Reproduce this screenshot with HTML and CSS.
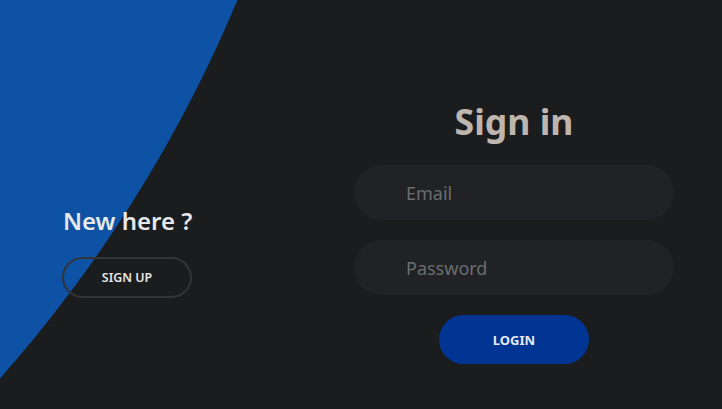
FILE: index.html
```html
<!DOCTYPE html>
<html lang="en">
<head>
<meta charset="utf-8">
<title>Sign in</title>
<link rel="stylesheet" href="styles.css">
</head>
<body>
<div class="container">
  <div class="blob"></div>
  <div class="panel-left">
    <h3 class="new-title">New here ?</h3>
    <button class="btn-outline" type="button">SIGN UP</button>
  </div>
  <form class="signin-form">
    <h2 class="title">Sign in</h2>
    <div class="input-field"><input type="text" placeholder="Email"></div>
    <div class="input-field"><input type="password" placeholder="Password"></div>
    <button class="btn-solid" type="button">LOGIN</button>
  </form>
</div>
</body>
</html>
```
FILE: styles.css
```css
* { box-sizing: border-box; margin: 0; padding: 0; }
html, body { width: 100%; height: 100%; }
body {
  background: #1b1c1e;
  font-family: "Noto Sans", "Open Sans", sans-serif;
  overflow: hidden;
}
.container {
  position: relative;
  width: 722px;
  height: 409px;
  display: flex;
  overflow: hidden;
}
.blob {
  position: absolute;
  left: -2385px;
  top: -1890px;
  width: 2728px;
  height: 2728px;
  border-radius: 50%;
  background: #0d52a5;
  z-index: 0;
}
.panel-left {
  position: relative;
  z-index: 1;
  width: 354px;
  display: flex;
  flex-direction: column;
  align-items: flex-start;
  padding: 205px 0 0 62px;
}
.new-title {
  color: #e6e8ea;
  font-size: 24px;
  font-weight: 600;
  line-height: 32px;
  padding-left: 1px;
}
.btn-outline {
  margin-top: 20px;
  width: 130px;
  height: 41px;
  border-radius: 41px;
  border: 2px solid #333436;
  background: transparent;
  color: #e6e6e6;
  font-family: "Noto Sans", sans-serif;
  font-size: 12.4px;
  font-weight: 600;
}
.signin-form {
  position: relative;
  z-index: 1;
  width: 320px;
  display: flex;
  flex-direction: column;
  align-items: center;
  padding-top: 96px;
}
.title {
  color: #beb6ae;
  font-size: 35.6px;
  font-weight: 700;
  line-height: 50px;
  margin-bottom: 19px;
}
.input-field {
  width: 320px;
  height: 55px;
  border-radius: 55px;
  background: #202225;
  margin-bottom: 20px;
  display: flex;
  align-items: center;
  padding-left: 52px;
}
.input-field input {
  background: none;
  border: none;
  outline: none;
  width: 100%;
  font-family: "Noto Sans", sans-serif;
  font-size: 18px;
  color: #cccccc;
}
.input-field input::placeholder { color: #6b6d6e; }
.btn-solid {
  width: 150px;
  height: 49px;
  border-radius: 49px;
  border: none;
  background: #003594;
  color: #e8eaf0;
  font-family: "Noto Sans", sans-serif;
  font-size: 13px;
  font-weight: 700;
}
```
